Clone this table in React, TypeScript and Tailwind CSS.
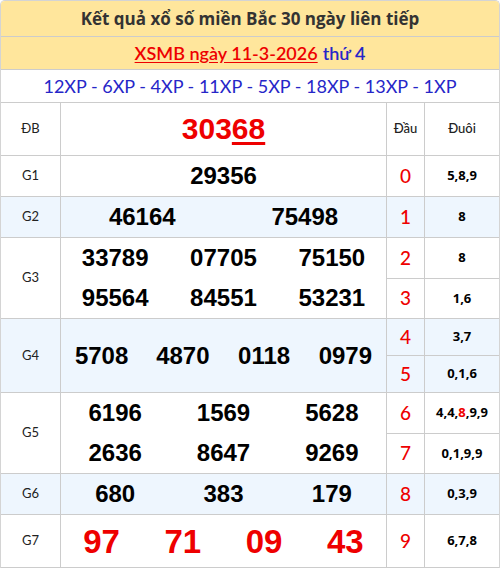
const ROUND = "font-['Lato','Noto_Sans',sans-serif]";
const WIDE = "font-['Open_Sans','Noto_Sans',sans-serif]";
const NUM = "font-['Liberation_Sans','Arial',sans-serif] font-bold";

type Sub = { dau: string; duoi: React.ReactNode };

type Prize = {
  label: string;
  bg: string;
  height: string;
  cols: string;
  lines: string[][];
  numClass: string;
  subs: Sub[];
};

const PRIZES: Prize[] = [
  {
    label: 'G1', bg: 'bg-white', height: 'h-[41px]', cols: 'grid-cols-1',
    lines: [['29356']], numClass: 'text-[24px] text-black',
    subs: [{ dau: '0', duoi: '5,8,9' }],
  },
  {
    label: 'G2', bg: 'bg-[#eef6fe]', height: 'h-[41px]', cols: 'grid-cols-2',
    lines: [['46164', '75498']], numClass: 'text-[24px] text-black',
    subs: [{ dau: '1', duoi: '8' }],
  },
  {
    label: 'G3', bg: 'bg-white', height: 'h-[81px]', cols: 'grid-cols-3',
    lines: [['33789', '07705', '75150'], ['95564', '84551', '53231']], numClass: 'text-[24px] text-black',
    subs: [{ dau: '2', duoi: '8' }, { dau: '3', duoi: '1,6' }],
  },
  {
    label: 'G4', bg: 'bg-[#eef6fe]', height: 'h-[74px]', cols: 'grid-cols-4',
    lines: [['5708', '4870', '0118', '0979']], numClass: 'text-[24px] text-black',
    subs: [{ dau: '4', duoi: '3,7' }, { dau: '5', duoi: '0,1,6' }],
  },
  {
    label: 'G5', bg: 'bg-white', height: 'h-[81px]', cols: 'grid-cols-3',
    lines: [['6196', '1569', '5628'], ['2636', '8647', '9269']], numClass: 'text-[24px] text-black',
    subs: [
      { dau: '6', duoi: <>4,4,<span className="text-[#ee0000]">8</span>,9,9</> },
      { dau: '7', duoi: '0,1,9,9' },
    ],
  },
  {
    label: 'G6', bg: 'bg-[#eef6fe]', height: 'h-[41px]', cols: 'grid-cols-3',
    lines: [['680', '383', '179']], numClass: 'text-[24px] text-black',
    subs: [{ dau: '8', duoi: '0,3,9' }],
  },
  {
    label: 'G7', bg: 'bg-white', height: 'h-[53px]', cols: 'grid-cols-4',
    lines: [['97', '71', '09', '43']], numClass: 'text-[33px] text-[#ee0000]',
    subs: [{ dau: '9', duoi: '6,7,8' }],
  },
];

function PrizeRow({ p }: { p: Prize }) {
  return (
    <div className={`flex ${p.height} ${p.bg} border-b border-[#cccccc]`}>
      <div className={`w-[60px] shrink-0 flex items-center justify-center border-r border-[#cccccc] text-[13px] text-[#222] ${ROUND}`}>
        {p.label}
      </div>
      <div className="w-[326px] shrink-0 flex flex-col justify-center border-r border-[#cccccc]">
        {p.lines.map((line, i) => (
          <div key={i} className={`flex-1 grid ${p.cols} items-center`}>
            {line.map((n) => (
              <span key={n} className={`text-center leading-none ${NUM} ${p.numClass}`}>{n}</span>
            ))}
          </div>
        ))}
      </div>
      <div className="flex-1 flex flex-col">
        {p.subs.map((s, i) => (
          <div key={s.dau} className={`flex flex-1 ${i < p.subs.length - 1 ? 'border-b border-[#cccccc]' : ''}`}>
            <div className={`w-[38px] shrink-0 flex items-center justify-center border-r border-[#cccccc] text-[19px] font-medium text-[#ee0000] ${ROUND}`}>
              {s.dau}
            </div>
            <div className={`flex-1 flex items-center justify-center text-[13px] font-bold text-black ${WIDE}`}>
              {s.duoi}
            </div>
          </div>
        ))}
      </div>
    </div>
  );
}

export default function App() {
  return (
    <div className="w-[500px] bg-white">
      <div className="border-x border-t border-[#d4d4d4] rounded-t-[5px] overflow-hidden">
        {/* ── Header ─────────────────────────── */}
        <div className={`h-[36px] bg-[#ffe69c] border-b border-[#cccccc] flex items-center justify-center text-[17px] font-bold text-[#333] ${WIDE}`}>
          Kết quả xổ số miền Bắc 30 ngày liên tiếp
        </div>
        <div className={`h-[33px] bg-[#ffe69c] border-b border-[#cccccc] flex items-center justify-center gap-[5px] text-[18px] font-semibold ${ROUND}`}>
          <span className="text-[#ee0000] underline underline-offset-2">XSMB ngày 11-3-2026</span>
          <span className="text-[#2626c8]">thứ 4</span>
        </div>
        <div className={`h-[33px] bg-white border-b border-[#cccccc] flex items-center justify-center text-[18px] text-[#2626c8] ${ROUND}`}>
          12XP - 6XP - 4XP - 11XP - 5XP - 18XP - 13XP - 1XP
        </div>

        {/* ── Results ────────────────────────── */}
        <div className="flex h-[53px] border-b border-[#cccccc]">
          <div className={`w-[60px] shrink-0 flex items-center justify-center border-r border-[#cccccc] text-[13px] text-[#222] ${ROUND}`}>
            ĐB
          </div>
          <div className={`w-[326px] shrink-0 flex items-center justify-center border-r border-[#cccccc] text-[30px] leading-none text-[#ee0000] ${NUM}`}>
            303<span className="underline underline-offset-[3px] decoration-[3px]">68</span>
          </div>
          <div className={`w-[38px] shrink-0 flex items-center justify-center border-r border-[#cccccc] text-[13px] font-medium text-[#222] ${ROUND}`}>
            Đầu
          </div>
          <div className={`flex-1 flex items-center justify-center text-[13px] font-medium text-[#222] ${ROUND}`}>
            Đuôi
          </div>
        </div>
        {PRIZES.map((p) => (
          <PrizeRow key={p.label} p={p} />
        ))}
      </div>
    </div>
  );
}
